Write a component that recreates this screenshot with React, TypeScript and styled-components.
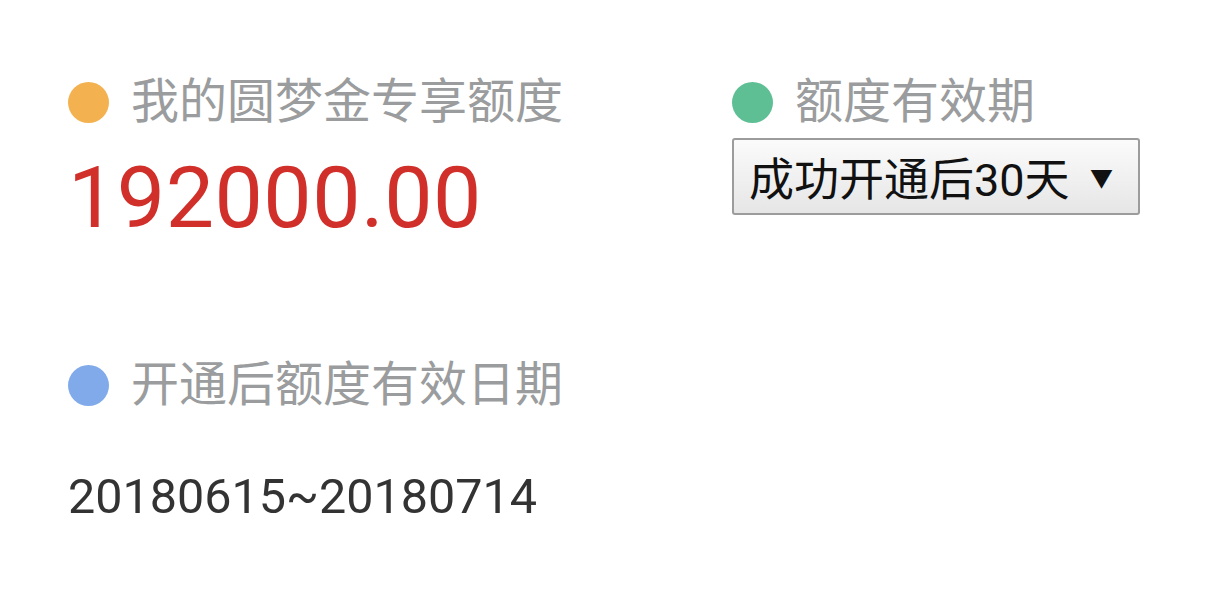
import React from "react";
import styled, { createGlobalStyle } from "styled-components";

const Global = createGlobalStyle`
  html, body { margin: 0; padding: 0; background: #ffffff; }
  body { font-family: Roboto, "Noto Sans CJK SC", sans-serif; }
`;

const Page = styled.div`
  width: 1232px;
  height: 608px;
  box-sizing: border-box;
  padding: 78px 0 0 68px;
  display: grid;
  grid-template-columns: 664px 1fr;
  grid-template-rows: 283px auto;
  background: #fff;
`;

const Section = styled.div`
  display: flex;
  flex-direction: column;
  align-items: flex-start;
`;

const Label = styled.div`
  display: flex;
  align-items: center;
  gap: 22px;
  height: 48px;
  font-family: Roboto, "Noto Sans CJK SC", sans-serif;
  font-size: 48px;
  line-height: 48px;
  color: #9a9c9e;
  white-space: nowrap;
`;

const Dot = styled.span<{ $color: string }>`
  width: 41px;
  height: 41px;
  border-radius: 50%;
  background: ${(p) => p.$color};
  flex: none;
`;

const Amount = styled.div`
  margin-top: 24px;
  font-family: Roboto, sans-serif;
  font-size: 86px;
  line-height: 96px;
  color: #d1302a;
  letter-spacing: 0.5px;
`;

const Select = styled.div`
  margin-top: 12px;
  width: 408px;
  height: 77px;
  box-sizing: border-box;
  border: 2px solid #9c9c9c;
  border-radius: 3px;
  background: linear-gradient(#fbfbfb, #e6e6e6);
  display: flex;
  align-items: center;
  justify-content: space-between;
  padding: 0 25px 0 15px;
  font-family: Roboto, "Noto Sans CJK SC", sans-serif;
  font-size: 45px;
  color: #111;
  white-space: nowrap;
`;

const Arrow = styled.span`
  font-size: 23px;
  color: #111;
`;

const DateText = styled.div`
  margin-top: 60px;
  font-family: Roboto, sans-serif;
  font-size: 48.5px;
  line-height: 56px;
  color: #333333;
`;

export default function App() {
  return (
    <>
      <Global />
      <Page>
        <Section>
          <Label>
            <Dot $color="#f3b24f" />
            我的圆梦金专享额度
          </Label>
          <Amount>192000.00</Amount>
        </Section>
        <Section>
          <Label>
            <Dot $color="#5ebf95" />
            额度有效期
          </Label>
          <Select>
            成功开通后30天
            <Arrow>▼</Arrow>
          </Select>
        </Section>
        <Section>
          <Label>
            <Dot $color="#80aaea" />
            开通后额度有效日期
          </Label>
          <DateText>20180615~20180714</DateText>
        </Section>
      </Page>
    </>
  );
}
